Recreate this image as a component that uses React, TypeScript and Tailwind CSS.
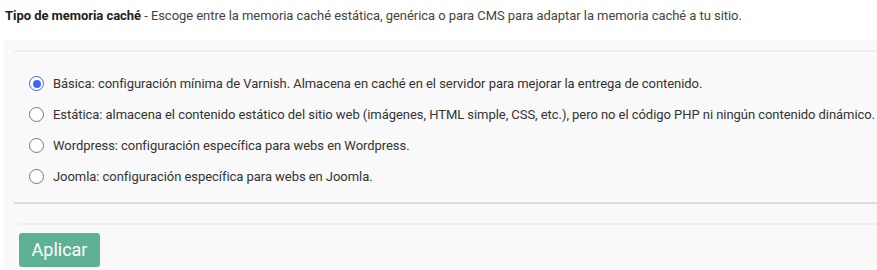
import React, { useState } from "react";

const options = [
  "Básica: configuración mínima de Varnish. Almacena en caché en el servidor para mejorar la entrega de contenido.",
  "Estática: almacena el contenido estático del sitio web (imágenes, HTML simple, CSS, etc.), pero no el código PHP ni ningún contenido dinámico.",
  "Wordpress: configuración específica para webs en Wordpress.",
  "Joomla: configuración específica para webs en Joomla.",
];

export default function App() {
  const [sel, setSel] = useState(0);
  return (
    <div className="w-[877px] h-[270px] overflow-hidden bg-white font-['Roboto',sans-serif] text-[13px] tracking-[-0.05px]">
      <div className="pl-[5px] pt-[8px] leading-[16px] text-[#444444] whitespace-nowrap">
        <span className="font-bold text-[#222222]">Tipo de memoria caché</span> - Escoge entre la memoria caché estática, genérica o para CMS para adaptar la memoria caché a tu sitio.
      </div>
      <div className="ml-[4px] mt-[16px] bg-[#f9f9f9] rounded-tl-[3px] h-[230px] pt-[10px]">
        <div className="ml-[10px] border-t-2 border-[#eeeeee]" />
        <div className="pt-[16px] ml-[25px] flex flex-col">
          {options.map((o, i) => (
            <label key={i} className="h-[31px] flex items-center gap-[9px] text-[#333333] whitespace-nowrap cursor-pointer">
              <input
                type="radio"
                name="cache"
                checked={sel === i}
                onChange={() => setSel(i)}
                className="sr-only"
              />
              <span
                className={
                  sel === i
                    ? "w-[15px] h-[15px] rounded-full border-[1.5px] border-[#3f66f2] bg-white flex items-center justify-center shrink-0"
                    : "w-[15px] h-[15px] rounded-full border-[1.5px] border-[#7a7a7a] bg-white shrink-0"
                }
              >
                {sel === i && <span className="w-[8px] h-[8px] rounded-full bg-[#3f66f2]" />}
              </span>
              <span>{o}</span>
            </label>
          ))}
        </div>
        <div className="ml-[10px] mt-[10px] border-t-2 border-[#dcdcdc]" />
        <div className="ml-[15px] mt-[19px] border-t-2 border-[#efefef]" />
        <button className="ml-[15px] mt-[8px] w-[81px] h-[34px] rounded-[3px] bg-[#5fb196] text-white text-[18px] leading-none tracking-normal">
          Aplicar
        </button>
      </div>
    </div>
  );
}
